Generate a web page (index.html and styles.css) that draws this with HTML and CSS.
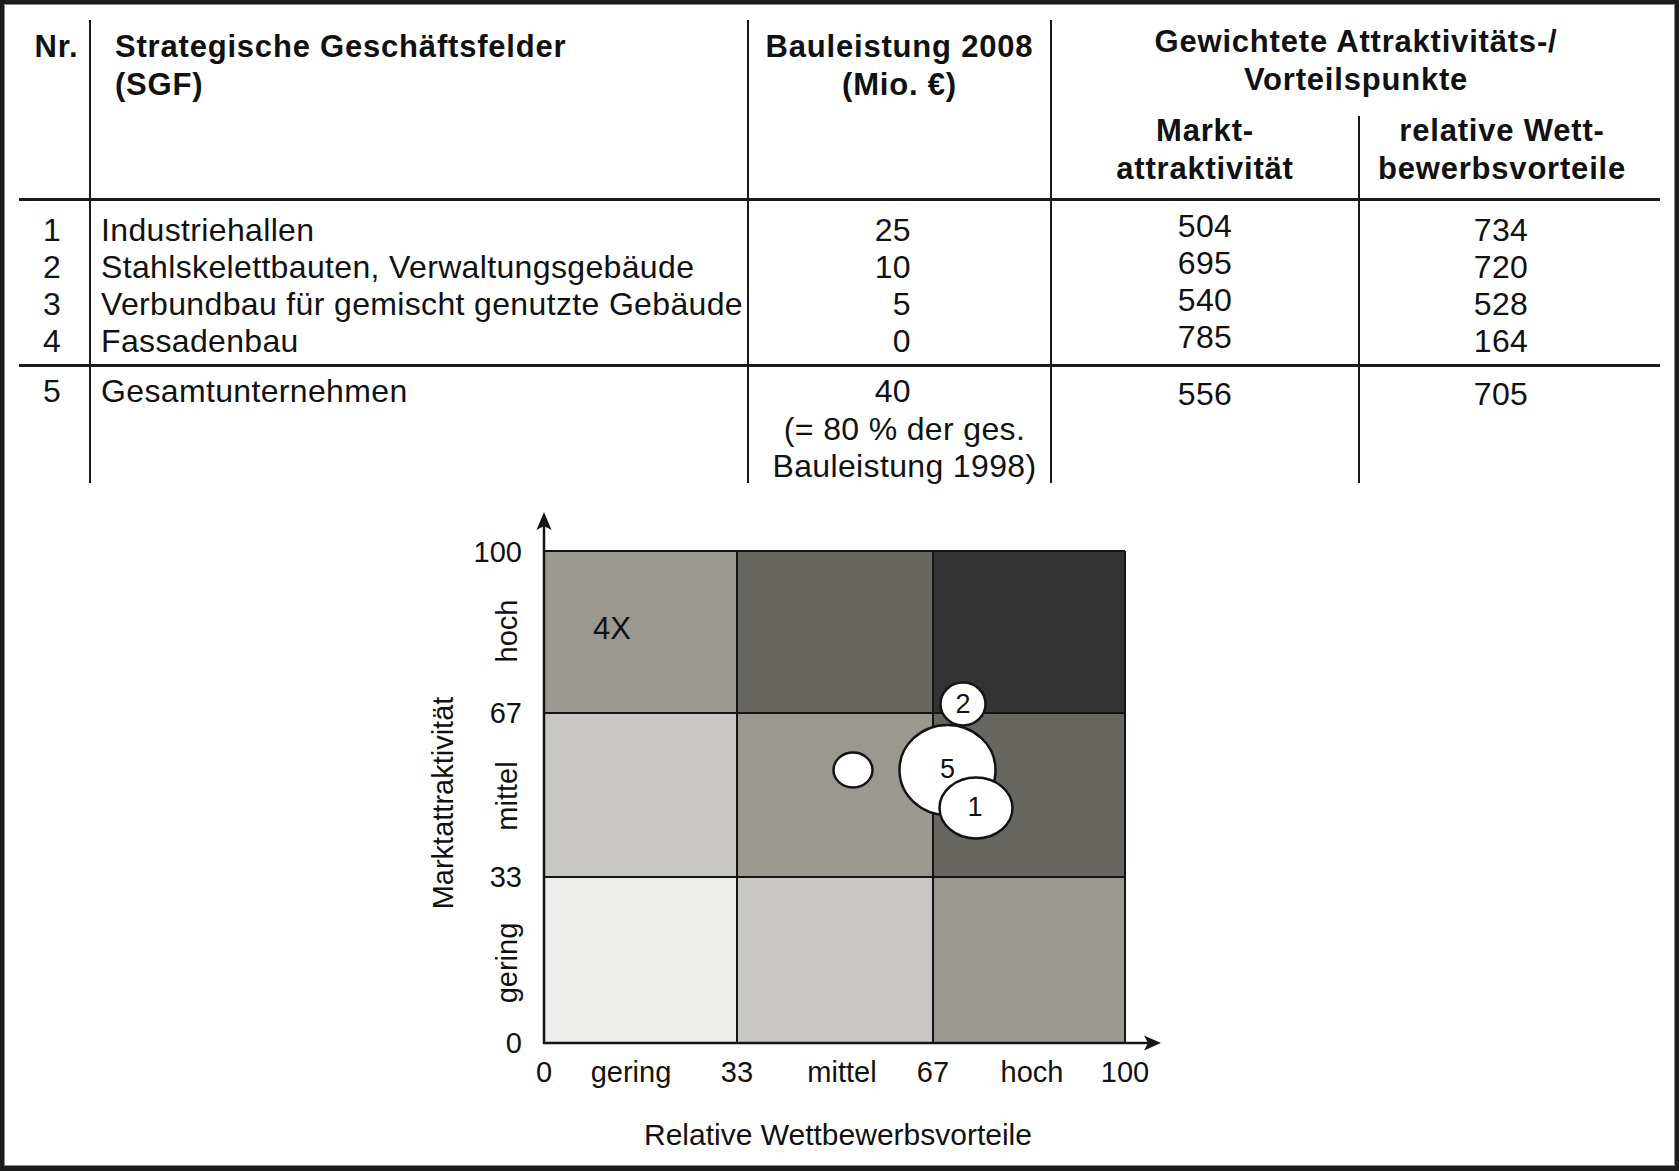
FILE: index.html
```html
<!DOCTYPE html>
<html lang="de">
<head>
<meta charset="utf-8">
<title>Portfolio SGF</title>
<link rel="stylesheet" href="styles.css">
</head>
<body>
<div class="frame">
  <div class="table">
    <div class="cell h h-nr">Nr.</div>
    <div class="cell h h-sgf vl">Strategische Geschäftsfelder<br>(SGF)</div>
    <div class="cell h h-bau vl">Bauleistung 2008<br>(Mio. €)</div>
    <div class="cell h h-gew vl">Gewichtete Attraktivitäts-/<br>Vorteilspunkte</div>
    <div class="cell h h-markt vl"><div class="sub">Markt-<br>attraktivität</div></div>
    <div class="cell h h-rel vl"><div class="sub">relative Wett-<br>bewerbsvorteile</div></div>

    <div class="cell b ht c-nr">1<br>2<br>3<br>4</div>
    <div class="cell b ht vl c-sgf">Industriehallen<br>Stahlskelettbauten, Verwaltungsgebäude<br>Verbundbau für gemischt genutzte Gebäude<br>Fassadenbau</div>
    <div class="cell b ht vl c-bau">25<br>10<br>5<br>0</div>
    <div class="cell b ht vl c-markt">504<br>695<br>540<br>785</div>
    <div class="cell b ht vl c-rel">734<br>720<br>528<br>164</div>

    <div class="cell t ht c-nr">5</div>
    <div class="cell t ht vl c-sgf">Gesamtunternehmen</div>
    <div class="cell t ht vl c-bau"><div class="num">40</div><div class="note">(= 80 % der ges.<br>Bauleistung 1998)</div></div>
    <div class="cell t ht vl c-markt low">556</div>
    <div class="cell t ht vl c-rel low">705</div>
  </div>

  <svg class="chart" width="1671" height="683" viewBox="4 483 1671 683" xmlns="http://www.w3.org/2000/svg">
    <rect x="544" y="551" width="193" height="162" fill="#9b9891"/>
    <rect x="737" y="551" width="196" height="162" fill="#686661"/>
    <rect x="933" y="551" width="192" height="162" fill="#333333"/>
    <rect x="544" y="713" width="193" height="164" fill="#c8c7c3"/>
    <rect x="737" y="713" width="196" height="164" fill="#9b9891"/>
    <rect x="933" y="713" width="192" height="164" fill="#686661"/>
    <rect x="544" y="877" width="193" height="166" fill="#ededeb"/>
    <rect x="737" y="877" width="196" height="166" fill="#c8c7c3"/>
    <rect x="933" y="877" width="192" height="166" fill="#9b9891"/>

    <g class="grid">
      <line x1="544" y1="551" x2="1125" y2="551"/>
      <line x1="544" y1="713" x2="1125" y2="713"/>
      <line x1="544" y1="877" x2="1125" y2="877"/>
      <line x1="737" y1="551" x2="737" y2="1043"/>
      <line x1="933" y1="551" x2="933" y2="1043"/>
      <line x1="1125" y1="551" x2="1125" y2="1043"/>
    </g>
    <g class="axis">
      <line x1="544" y1="1044" x2="544" y2="524"/>
      <line x1="543" y1="1043" x2="1150" y2="1043"/>
    </g>
    <polygon class="arrow" points="544,512 551.5,530 544,526 536.5,530"/>
    <polygon class="arrow" points="1161,1043 1144,1035.5 1148,1043 1144,1050.5"/>

    <text class="ax" x="522" y="562" text-anchor="end">100</text>
    <text class="ax" x="522" y="723" text-anchor="end">67</text>
    <text class="ax" x="522" y="887" text-anchor="end">33</text>
    <text class="ax" x="522" y="1053" text-anchor="end">0</text>

    <text class="ax" transform="translate(517 631) rotate(-90)" text-anchor="middle">hoch</text>
    <text class="ax" transform="translate(517 796) rotate(-90)" text-anchor="middle">mittel</text>
    <text class="ax" transform="translate(517 963) rotate(-90)" text-anchor="middle">gering</text>
    <text class="ax" transform="translate(453 803) rotate(-90)" text-anchor="middle">Marktattraktivität</text>

    <text class="ax" x="544" y="1082" text-anchor="middle">0</text>
    <text class="ax" x="631" y="1082" text-anchor="middle">gering</text>
    <text class="ax" x="737" y="1082" text-anchor="middle">33</text>
    <text class="ax" x="842" y="1082" text-anchor="middle">mittel</text>
    <text class="ax" x="933" y="1082" text-anchor="middle">67</text>
    <text class="ax" x="1032" y="1082" text-anchor="middle">hoch</text>
    <text class="ax" x="1125" y="1082" text-anchor="middle">100</text>

    <text class="ax title" x="838" y="1145" text-anchor="middle">Relative Wettbewerbsvorteile</text>

    <text class="ax lbl4" x="593" y="639">4X</text>

    <g class="bubble">
      <ellipse cx="853" cy="770" rx="19.5" ry="17.5"/>
      <ellipse cx="947.5" cy="770" rx="48" ry="45"/>
      <ellipse cx="963" cy="704" rx="22.5" ry="21.5"/>
      <ellipse cx="976" cy="808" rx="36.5" ry="30.5"/>
    </g>
    <text class="ax bnum" x="947.5" y="778" text-anchor="middle">5</text>
    <text class="ax bnum" x="963" y="713" text-anchor="middle">2</text>
    <text class="ax bnum" x="975" y="816" text-anchor="middle">1</text>
  </svg>
</div>
</body>
</html>
```

FILE: styles.css
```css
html, body {
  margin: 0;
  padding: 0;
  background: #ffffff;
}

.frame {
  width: 1679px;
  height: 1171px;
  box-sizing: border-box;
  border: 4px solid #1b1b1b;
  border-bottom-width: 5px;
  box-shadow: inset 0 0 0 1px #8a8a8a;
  padding-top: 16px;
  background: #ffffff;
  font-family: "Liberation Sans", Arial, sans-serif;
  color: #111111;
  overflow: hidden;
}

.table {
  margin-left: 15px;
  width: 1641px;
  display: grid;
  grid-template-columns: 70px 658px 303px 308px 302px;
  grid-template-rows: 96px 82px 166px 119px;
}

.cell {
  box-sizing: border-box;
  min-width: 0;
  white-space: nowrap;
}

.vl {
  border-left: 2px solid #1a1a1a;
}

.ht {
  border-top: 3px solid #1a1a1a;
}

/* header */
.h {
  font-weight: bold;
  font-size: 31px;
  letter-spacing: 0.8px;
  line-height: 38px;
}

.h-nr {
  grid-column: 1;
  grid-row: 1 / 3;
  text-align: center;
  padding-top: 8px;
  padding-left: 5px;
}

.h-sgf {
  grid-column: 2;
  grid-row: 1 / 3;
  padding-top: 8px;
  padding-left: 24px;
}

.h-bau {
  grid-column: 3;
  grid-row: 1 / 3;
  text-align: center;
  padding-top: 8px;
}

.h-gew {
  grid-column: 4 / 6;
  grid-row: 1;
  text-align: center;
  padding-top: 3px;
}

.h-markt {
  grid-column: 4;
  grid-row: 2;
  text-align: center;
}

.h-rel {
  grid-column: 5;
  grid-row: 2;
  text-align: center;
  padding-right: 16px;
}

.sub {
  margin-top: -4px;
}

/* body rows */
.b, .t {
  font-size: 32px;
  letter-spacing: 0.35px;
  line-height: 37px;
}

.b {
  grid-row: 3;
  padding-top: 11px;
}

.t {
  grid-row: 4;
  padding-top: 6px;
  line-height: 37.5px;
}

.c-nr {
  grid-column: 1;
  text-align: center;
  padding-right: 4px;
}

.c-sgf {
  grid-column: 2;
  padding-left: 10px;
}

.c-bau {
  grid-column: 3;
  text-align: right;
  padding-right: 139px;
}

.t.c-bau {
  padding-right: 0;
}

.t.c-bau .num {
  text-align: right;
  padding-right: 139px;
}

.t.c-bau .note {
  text-align: center;
  padding-left: 10px;
}

.c-markt {
  grid-column: 4;
  text-align: center;
}

.b.c-markt {
  padding-top: 7px;
}

.c-rel {
  grid-column: 5;
  text-align: center;
  padding-right: 18px;
}

.t.low {
  padding-top: 9px;
}

/* chart */
.chart {
  display: block;
}

.grid line {
  stroke: #141414;
  stroke-width: 2;
}

.axis line {
  stroke: #141414;
  stroke-width: 2.5;
}

.arrow {
  fill: #141414;
}

.ax {
  font-family: "Liberation Sans", Arial, sans-serif;
  font-size: 29px;
  fill: #111111;
}

.title {
  font-size: 30px;
}

.lbl4 {
  font-size: 31px;
}

.bubble ellipse {
  fill: #ffffff;
  stroke: #141414;
  stroke-width: 2.5;
}

.bnum {
  font-size: 27px;
}
```
